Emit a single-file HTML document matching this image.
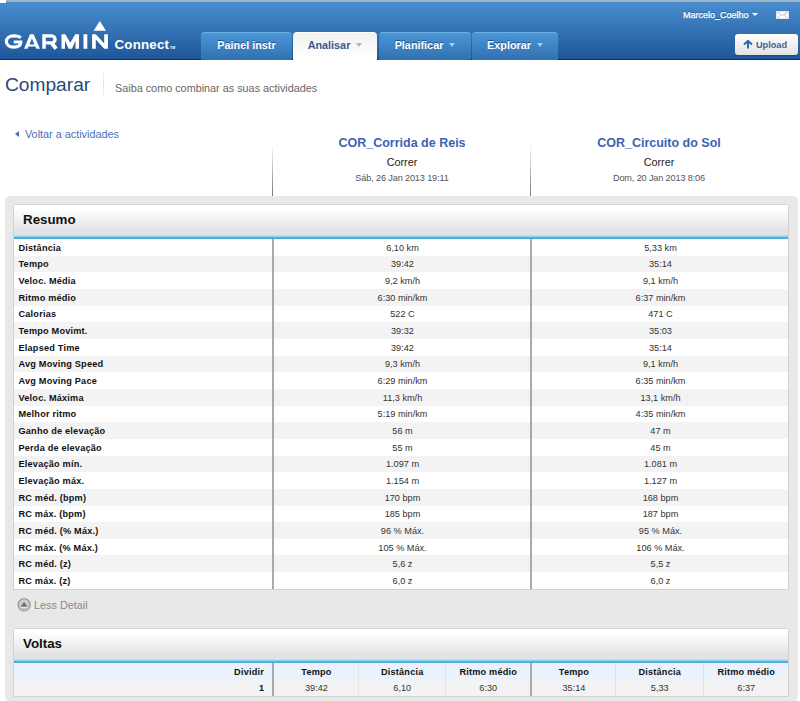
<!DOCTYPE html>
<html><head><meta charset="utf-8">
<style>
*{box-sizing:border-box;margin:0;padding:0}
html,body{width:800px;height:701px;overflow:hidden;background:#fff;font-family:"Liberation Sans",sans-serif;position:relative}
.abs{position:absolute}
#hdr{left:0;top:0;width:800px;height:60px;background:linear-gradient(#4a90d0,#1f5699);border-bottom:1px solid #0c2e5c}
#topstrip{left:6px;top:0;width:794px;height:2px;background:#9fb3c6}
#topwhite{left:0;top:0;width:6px;height:3px;background:#fff}
.tab{position:absolute;top:32px;height:28px;border-radius:4px 4px 0 0;background:linear-gradient(#4b96d6,#3170b1);border-top:1px solid #6fb0e6;color:#fff;font-weight:bold;font-size:10.83px;text-align:center;line-height:25px;text-shadow:0 -1px 0 #1f4f86}
.tab.act{background:linear-gradient(#f1f1f1,#fff);border-top:1px solid #fff;color:#3a5b8c;text-shadow:none}
.arr{display:inline-block;width:0;height:0;border-left:3.5px solid transparent;border-right:3.5px solid transparent;border-top:4px solid #a6c9ec;vertical-align:middle;margin-left:6px;position:relative;top:-1px}
.act .arr{border-top-color:#a0bbd8}
#user{left:683px;top:9px;color:#fff;font-size:9px;line-height:12px;text-shadow:0 -1px 0 rgba(10,40,90,.5);-webkit-text-stroke:0.25px #fff}
#upl{left:735px;top:34px;width:63px;height:21px;border-radius:3px;background:linear-gradient(#fff,#e2e2e2);color:#44648e;font-weight:bold;font-size:9.17px;line-height:21px;box-shadow:0 1px 0 rgba(0,0,0,.15)}
#title{left:5px;top:73px;font-size:19.17px;color:#28497a;line-height:24px}
#sep1{left:103px;top:67px;width:1px;height:35px;background:linear-gradient(#fff,#e4e4e4 40%,#e4e4e4 60%,#fff)}
#sub{left:115px;top:81px;font-size:10.83px;color:#666;line-height:14px}
#back{left:15px;top:127px;font-size:10.83px;color:#4a70b3;line-height:14px}
.vsep{position:absolute;top:144px;width:1px;height:52px;background:linear-gradient(rgba(120,120,120,0),#777)}
.act-h{position:absolute;top:136px;width:256px;text-align:center}
.act-h .n{font-weight:bold;font-size:12.5px;color:#3d62b3;line-height:14px}
.act-h .t{font-size:10.83px;color:#222;line-height:14px;margin-top:5px}
.act-h .d{font-size:9.17px;color:#555;line-height:12px;margin-top:3px;letter-spacing:-0.15px}
#grey{left:5px;top:196px;width:793px;height:506px;background:#e8e8e8;border-radius:5px}
.panel{position:absolute;left:13px;width:776px;background:#fff;border:1px solid #d2d2d2;border-radius:3px 3px 0 0}
.ph{height:34px;background:linear-gradient(#fff 0,#fefefe 4px,#e3e3e3 26px,#e1e3e4 30px,#c8dbe8 30px,#c8dbe8 31px,#86d4f6 31px,#86d4f6 32px,#55b2e2 32px,#55b2e2 33px,#58a6d2 33px,#58a6d2 34px);box-shadow:0 1px 0 #effbff;font-weight:bold;font-size:13.33px;color:#111;padding-left:9px;line-height:30px}
table{border-collapse:collapse;width:774px;table-layout:fixed}
td{height:16.667px;padding:1px 0 0 1px;font-size:9.17px;color:#333;text-align:center;line-height:12px;white-space:nowrap}
td.l{text-align:left;font-weight:bold;color:#111;padding-left:4.5px;letter-spacing:0.2px}
tr.g td{background:#f3f3f3}
td.s{border-left:2px solid #a9a9a9}
.vt td.r{text-align:right;font-weight:bold;color:#111;padding-right:8px}
.vt tr.hb td{background:#eaf3fd;font-weight:bold;color:#111;letter-spacing:0.2px}
.vt td.x{border-left:1px solid #e4e4e4}
#less{left:17px;top:598px;font-size:10.83px;color:#8a8a8a;line-height:14px}
#less .c{position:absolute;left:0;top:0;width:13px;height:13px;border-radius:50%;background:#d0d0d0;border:1px solid #aaa}
</style></head><body>
<div id="hdr" class="abs"></div>
<div id="topstrip" class="abs"></div>
<div id="topwhite" class="abs"></div>
<svg class="abs" style="left:0;top:0" width="200" height="60" viewBox="0 0 200 60">
<g fill="#fff">
<path d="M20.6,37.9 C19.5,36.5 17.2,35.9 13.6,35.9 C9.2,35.9 6.4,38.2 6.4,41.5 C6.4,44.8 9.2,47.1 13.6,47.1 C17.8,47.1 20.85,45.4 20.85,42 H13.75" fill="none" stroke="#fff" stroke-width="3.2"/>
<path fill-rule="evenodd" d="M24,48.75 L30,34.25 L33.6,34.25 L40,48.75 L36.4,48.75 L35.4,46.5 L28.4,46.5 L27.5,48.75 Z M29.5,44.4 L34.4,44.4 L31.9,38.6 Z"/>
<rect x="42.25" y="34.25" width="3.5" height="14.5"/>
<path d="M44,35.9 H51.6 A3.47,3.47 0 0 1 51.6,42.85 H44" fill="none" stroke="#fff" stroke-width="3.3"/>
<path d="M51.8,43.2 L56.2,48.75" fill="none" stroke="#fff" stroke-width="3.8"/>
<path d="M61.5,48.75 L61.5,34.25 L65.3,34.25 L70.25,42.8 L75.2,34.25 L79,34.25 L79,48.75 L75.5,48.75 L75.5,40.5 L72,48.75 L68.5,48.75 L65,40.5 L65,48.75 Z"/>
<rect x="83.5" y="34.25" width="3.8" height="14.5"/>
<path d="M92.1,48.75 L92.1,34.25 L95.8,34.25 L104.2,43.5 L104.2,34.25 L107.9,34.25 L107.9,48.75 L104.2,48.75 L95.8,39.5 L95.8,48.75 Z"/>
<path d="M93.6,30.75 L99.8,21 L106,30.75 Z"/>
</g>
<text x="114.5" y="49" fill="#fff" font-family="Liberation Sans" font-weight="bold" font-size="13.33" letter-spacing="0.2">Connect</text>
<text x="170" y="49" fill="#fff" font-family="Liberation Sans" font-weight="bold" font-size="3.5">TM</text>
</svg>
<div class="tab" style="left:201px;width:91px">Painel instr</div>
<div class="tab act" style="left:293px;width:84px">Analisar<span class="arr"></span></div>
<div class="tab" style="left:379px;width:92px">Planificar<span class="arr"></span></div>
<div class="tab" style="left:472px;width:86px">Explorar<span class="arr"></span></div>
<div id="user" class="abs">Marcelo_Coelho<span class="arr" style="border-top-color:#fff;border-left-width:3px;border-right-width:3px;border-top-width:3px;margin-left:3px"></span></div>
<svg class="abs" style="left:776px;top:11px" width="13" height="8" viewBox="0 0 13 8"><rect x="0.5" y="0.5" width="12" height="7" fill="#fff" stroke="#dfe8f2" stroke-width="1"/><path d="M1,1 L6.5,4.5 L12,1 M1,7.5 L4.8,4 M12,7.5 L8.2,4" fill="none" stroke="#9fb6cf" stroke-width="0.8"/></svg>
<div id="upl" class="abs"><svg class="abs" style="left:8px;top:6px" width="10" height="9" viewBox="0 0 10 9"><path d="M1,4.6 L5,0.9 L9,4.6 M5,1.2 V8.6" fill="none" stroke="#2b6aad" stroke-width="2"/></svg><span class="abs" style="left:21px;top:0.7px">Upload</span></div>

<div id="title" class="abs">Comparar</div>
<div id="sep1" class="abs"></div>
<div id="sub" class="abs">Saiba como combinar as suas actividades</div>
<div id="back" class="abs"><span class="abs" style="left:0;top:3.5px;width:0;height:0;border-top:3.5px solid transparent;border-bottom:3.5px solid transparent;border-right:4px solid #4a70b3"></span><span style="margin-left:10px">Voltar a actividades</span></div>
<div class="vsep" style="left:272px"></div>
<div class="vsep" style="left:530px"></div>
<div class="act-h" style="left:274px"><div class="n">COR_Corrida de Reis</div><div class="t">Correr</div><div class="d">Sáb, 26 Jan 2013 19:11</div></div>
<div class="act-h" style="left:531px"><div class="n">COR_Circuito do Sol</div><div class="t">Correr</div><div class="d">Dom, 20 Jan 2013 8:06</div></div>

<div id="grey" class="abs"></div>
<div class="panel" style="top:204px;height:386px">
<div class="ph">Resumo</div>
<table>
<colgroup><col style="width:259px"><col style="width:258px"><col style="width:257px"></colgroup>
<tr><td class="l">Distância</td><td class="s">6,10 km</td><td class="s">5,33 km</td></tr>
<tr class="g"><td class="l">Tempo</td><td class="s">39:42</td><td class="s">35:14</td></tr>
<tr><td class="l">Veloc. Média</td><td class="s">9,2 km/h</td><td class="s">9,1 km/h</td></tr>
<tr class="g"><td class="l">Ritmo médio</td><td class="s">6:30 min/km</td><td class="s">6:37 min/km</td></tr>
<tr><td class="l">Calorias</td><td class="s">522 C</td><td class="s">471 C</td></tr>
<tr class="g"><td class="l">Tempo Movimt.</td><td class="s">39:32</td><td class="s">35:03</td></tr>
<tr><td class="l">Elapsed Time</td><td class="s">39:42</td><td class="s">35:14</td></tr>
<tr class="g"><td class="l">Avg Moving Speed</td><td class="s">9,3 km/h</td><td class="s">9,1 km/h</td></tr>
<tr><td class="l">Avg Moving Pace</td><td class="s">6:29 min/km</td><td class="s">6:35 min/km</td></tr>
<tr class="g"><td class="l">Veloc. Máxima</td><td class="s">11,3 km/h</td><td class="s">13,1 km/h</td></tr>
<tr><td class="l">Melhor ritmo</td><td class="s">5:19 min/km</td><td class="s">4:35 min/km</td></tr>
<tr class="g"><td class="l">Ganho de elevação</td><td class="s">56 m</td><td class="s">47 m</td></tr>
<tr><td class="l">Perda de elevação</td><td class="s">55 m</td><td class="s">45 m</td></tr>
<tr class="g"><td class="l">Elevação mín.</td><td class="s">1.097 m</td><td class="s">1.081 m</td></tr>
<tr><td class="l">Elevação máx.</td><td class="s">1.154 m</td><td class="s">1.127 m</td></tr>
<tr class="g"><td class="l">RC méd. (bpm)</td><td class="s">170 bpm</td><td class="s">168 bpm</td></tr>
<tr><td class="l">RC máx. (bpm)</td><td class="s">185 bpm</td><td class="s">187 bpm</td></tr>
<tr class="g"><td class="l">RC méd. (% Máx.)</td><td class="s">96 % Máx.</td><td class="s">95 % Máx.</td></tr>
<tr><td class="l">RC máx. (% Máx.)</td><td class="s">105 % Máx.</td><td class="s">106 % Máx.</td></tr>
<tr class="g"><td class="l">RC méd. (z)</td><td class="s">5,6 z</td><td class="s">5,5 z</td></tr>
<tr><td class="l">RC máx. (z)</td><td class="s">6,0 z</td><td class="s">6,0 z</td></tr>
</table>
</div>
<div id="less" class="abs"><svg class="abs" style="left:0;top:0" width="15" height="15" viewBox="0 0 15 15"><defs><linearGradient id="lg" x1="0" y1="0" x2="0" y2="1"><stop offset="0" stop-color="#d0d0d0"/><stop offset="1" stop-color="#c2c2c2"/></linearGradient></defs><circle cx="7.1" cy="6.8" r="6.1" fill="url(#lg)" stroke="#9c9c9c" stroke-width="1.3"/><path d="M3.9,8.4 L7.1,4.0 L10.3,8.4 Z" fill="#6c6c6c"/><path d="M3.9,9.5 H10.3" stroke="#eeeeee" stroke-width="0.8"/></svg><span style="margin-left:17px">Less Detail</span></div>

<div class="panel" style="top:628px;height:69px">
<div class="ph">Voltas</div>
<table class="vt">
<colgroup><col style="width:259px"><col style="width:85.5px"><col style="width:86.5px"><col style="width:86px"><col style="width:84.5px"><col style="width:87.5px"><col style="width:85px"></colgroup>
<tr class="hb"><td class="r">Dividir</td><td class="s">Tempo</td><td class="x">Distância</td><td class="x">Ritmo médio</td><td class="s">Tempo</td><td class="x">Distância</td><td class="x">Ritmo médio</td></tr>
<tr class="g"><td class="r">1</td><td class="s">39:42</td><td class="x">6,10</td><td class="x">6:30</td><td class="s">35:14</td><td class="x">5,33</td><td class="x">6:37</td></tr>
</table>
</div>
</body></html>
